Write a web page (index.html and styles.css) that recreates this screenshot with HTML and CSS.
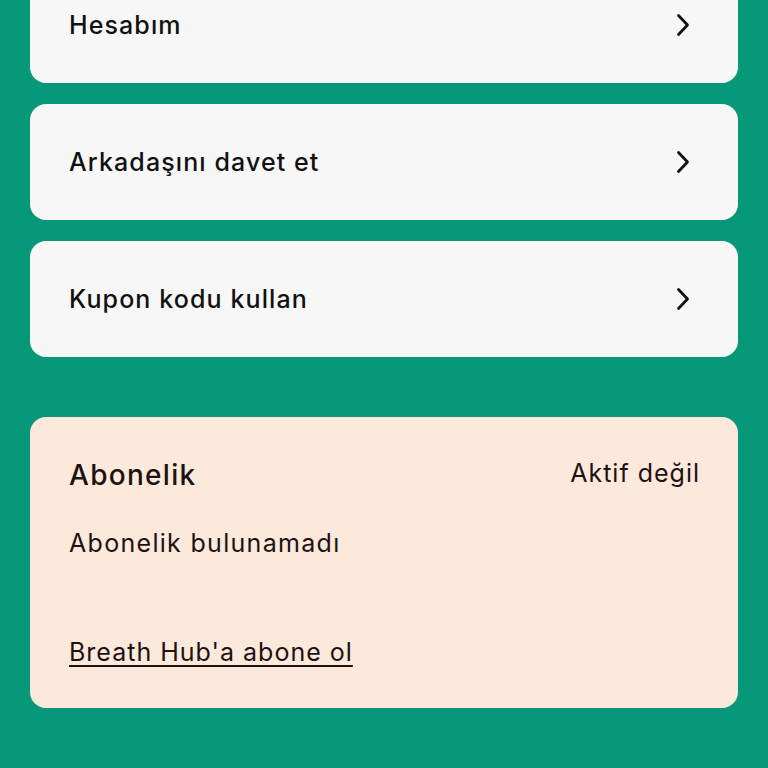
FILE: index.html
```html
<!DOCTYPE html>
<html lang="tr">
<head>
    <meta charset="UTF-8">
    <meta name="viewport" content="width=device-width, initial-scale=1.0">
    <title>Profil</title>
    <link rel="stylesheet" href="styles.css">
</head>
<body>
    <main class="page">
        <!-- Menu -->
        <nav class="menu">
            <a class="menu-item" href="#">
                <span>Hesabım</span>
                <svg class="chevron" viewBox="0 0 16 24"><path d="M3.5 2.5l9 9.5-9 9.5"/></svg>
            </a>
            <a class="menu-item" href="#">
                <span>Arkadaşını davet et</span>
                <svg class="chevron" viewBox="0 0 16 24"><path d="M3.5 2.5l9 9.5-9 9.5"/></svg>
            </a>
            <a class="menu-item" href="#">
                <span>Kupon kodu kullan</span>
                <svg class="chevron" viewBox="0 0 16 24"><path d="M3.5 2.5l9 9.5-9 9.5"/></svg>
            </a>
        </nav>

        <!-- Subscription -->
        <section class="subscription">
            <div class="sub-header">
                <h2>Abonelik</h2>
                <span class="sub-status">Aktif değil</span>
            </div>
            <p class="sub-text">Abonelik bulunamadı</p>
            <a class="sub-link" href="#">Breath Hub'a abone ol</a>
        </section>
    </main>
</body>
</html>
```

FILE: styles.css
```css
:root {
    --bg-primary: #079779;
    --card-light: #f7f7f7;
    --card-peach: #fde8dc;
    --text-primary: #111111;
    --text-dark: #1c1210;
    --font-primary: 'Inter', 'Noto Sans', sans-serif;
}

body {
    margin: 0;
    padding: 0;
    font-family: var(--font-primary);
    background-color: var(--bg-primary);
    color: var(--text-primary);
    overflow: hidden;
}

.page {
    padding: 0 30px;
    margin-top: -33px;
}

.menu {
    display: flex;
    flex-direction: column;
    gap: 21px;
}

.menu-item {
    display: flex;
    align-items: center;
    justify-content: space-between;
    height: 116px;
    padding: 0 47px 0 39px;
    background-color: var(--card-light);
    border-radius: 16px;
    color: var(--text-primary);
    text-decoration: none;
    font-size: 25px;
    font-weight: 500;
    letter-spacing: 1.1px;
}

.chevron {
    width: 16px;
    height: 24px;
    fill: none;
    stroke: #111;
    stroke-width: 2.8;
    stroke-linecap: round;
    stroke-linejoin: round;
}

.subscription {
    margin-top: 60px;
    height: 291px;
    box-sizing: border-box;
    padding: 40px 38px 38px 39px;
    background-color: var(--card-peach);
    border-radius: 16px;
    color: var(--text-dark);
}

.sub-header {
    display: flex;
    justify-content: space-between;
    align-items: center;
    height: 36px;
}

.sub-header h2 {
    margin: 0;
    font-size: 28px;
    font-weight: 500;
    letter-spacing: 1.3px;
}

.sub-status {
    font-size: 25px;
    letter-spacing: 1px;
    margin-top: -4px;
}

.sub-text {
    margin: 32px 0 0;
    font-size: 25px;
    line-height: 36px;
    letter-spacing: 1.3px;
}

.sub-link {
    display: inline-block;
    margin-top: 73px;
    font-size: 25px;
    line-height: 36px;
    letter-spacing: 1px;
    color: var(--text-dark);
    text-underline-offset: 4px;
    text-decoration-thickness: 2px;
}
```
